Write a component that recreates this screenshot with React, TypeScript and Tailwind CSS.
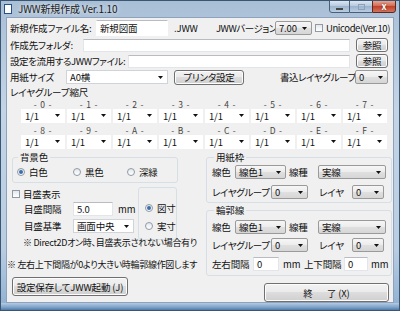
import React from "react";

const grayBox =
  "border border-[#9a9a9a] rounded-[2px] bg-[linear-gradient(#f6f6f6,#ececec_50%,#e0e0e0_50%,#d6d6d6)]";
const whiteBox = "border border-[#cfd4da] bg-white";

function Arrow() {
  return (
    <svg width="5" height="3" viewBox="0 0 5 3" className="shrink-0">
      <path d="M0 0h5L2.5 3z" fill="#111" />
    </svg>
  );
}

function Combo({ text, className, white = false }: { text: string; className: string; white?: boolean }) {
  return (
    <div className={`flex shrink-0 items-center h-[14px] pl-[3px] pr-[4px] ${white ? whiteBox : grayBox} ${className}`}>
      <span className="flex-1">{text}</span>
      <Arrow />
    </div>
  );
}

function TextBox({ text = "", className }: { text?: string; className: string }) {
  return (
    <div className={`flex shrink-0 items-center bg-white border border-[#e2e6ea] border-t-[#b8bcc2] pl-[3px] ${className}`}>
      {text}
    </div>
  );
}

function Btn({ children, className }: { children: React.ReactNode; className: string }) {
  return (
    <div
      className={`flex shrink-0 items-center justify-center rounded-[3px] border border-[#707070] bg-[linear-gradient(#f2f2f2,#ebebeb_45%,#dddddd_50%,#cfcfcf)] shadow-[inset_0_0_0_1px_#fcfcfc] ${className}`}
    >
      {children}
    </div>
  );
}

function Radio({ on = false, label, className = "" }: { on?: boolean; label: string; className?: string }) {
  return (
    <div className={`flex items-center gap-[4px] ${className}`}>
      <span className="w-[8px] h-[8px] rounded-full border border-[#8f9aa6] bg-[linear-gradient(#e4e8ec,#ffffff)] flex items-center justify-center">
        {on && <span className="w-[4px] h-[4px] rounded-full bg-[#3d6ea8]" />}
      </span>
      <span>{label}</span>
    </div>
  );
}

function Check({ label, className = "" }: { label: string; className?: string }) {
  return (
    <div className={`flex items-center gap-[3px] ${className}`}>
      <span className="w-[8px] h-[8px] border border-[#8f9aa6] bg-[linear-gradient(#e4e8ec,#ffffff)]" />
      <span>{label}</span>
    </div>
  );
}

const scales = ["0", "1", "2", "3", "4", "5", "6", "7"];
const scales2 = ["8", "9", "A", "B", "C", "D", "E", "F"];

function ScaleRow({ keys }: { keys: string[] }) {
  return (
    <>
      {keys.map((k) => (
        <div key={k} className="self-end text-center text-[8.5px] leading-[9px] tracking-[0.8px] text-[#444]">
          {"-\u00a0" + k + "\u00a0-"}
        </div>
      ))}
    </>
  );
}

export default function App() {
  return (
    <div className="w-[400px] h-[311px] overflow-hidden flex flex-col whitespace-nowrap text-[9.5px] tracking-[-0.15px] leading-[12px] text-[#111] [font-feature-settings:'palt'] font-['Noto_Sans_CJK_JP',sans-serif] border border-[#3b5673] bg-[linear-gradient(180deg,#a9bfd6_0%,#c3d4e6_35%,#b9cde2_80%,#8fb0d2_100%)]">
      {/* title bar */}
      <div className="h-[16px] flex items-start shrink-0">
        <div className="mt-[3px] ml-[3px] w-[8px] h-[10px] bg-white border border-[#2a4f8f]" />
        <div className="mt-[2px] ml-[6px] text-[10px] text-[#1c1c1c] [text-shadow:0_0_4px_#ffffff]">JWW新規作成 Ver.1.10</div>
        <div className="ml-auto mr-[3px] flex h-[13px] -mt-[1px]">
          <div className="w-[21px] border border-[#4a5f78] rounded-bl-[3px] bg-[linear-gradient(#dbe6f2,#b3c6dc_50%,#9db4ce_50%,#b9cde2)] flex items-center justify-center">
            <span className="w-[7px] h-[2px] bg-white border-[0.5px] border-[#444] mt-[4px]" />
          </div>
          <div className="w-[22px] border-y border-[#4a5f78] bg-[linear-gradient(#dbe6f2,#b3c6dc_50%,#9db4ce_50%,#b9cde2)] flex items-center justify-center">
            <span className="w-[7px] h-[6px] border border-[#8da2b8] bg-transparent" />
          </div>
          <div className="w-[24px] border border-[#5a2a22] rounded-br-[3px] bg-[linear-gradient(#e8a493,#d0644c_50%,#c2412a_50%,#d2745c)] flex items-center justify-center text-white text-[9px] font-bold [text-shadow:0_0_2px_#5a1a10]">
            x
          </div>
        </div>
      </div>

      {/* client area */}
      <div className="mx-[5px] h-[286px] shrink-0 bg-[#f0f0f0] border border-[#8ea3bb] flex flex-col">
        {/* row 1 */}
        <div className="mt-[2px] h-[16px] flex items-center">
          <div className="w-[89px] shrink-0 pl-[3px]">新規作成ファイル名:</div>
          <TextBox text="新規図面" className="w-[72px] h-[16px] border-transparent" />
          <div className="w-[48px] shrink-0 pl-[6px]">.JWW</div>
          <div className="w-[59px] shrink-0 tracking-[-0.5px]">JWWバージョン:</div>
          <Combo text="7.00" className="w-[37px]" />
          <Check label="Unicode(Ver.10)" className="ml-[3px] tracking-[-0.4px]" />
        </div>
        {/* row 2 */}
        <div className="mt-[2px] h-[14px] flex items-center">
          <div className="w-[76px] shrink-0 pl-[3px]">作成先フォルダ:</div>
          <TextBox className="w-[267px] h-[13px]" />
          <Btn className="ml-[6px] w-[32px] h-[14px]">参照</Btn>
        </div>
        {/* row 3 */}
        <div className="mt-[2px] h-[14px] flex items-center">
          <div className="w-[121px] shrink-0 pl-[3px] tracking-[-0.4px]">設定を流用するJWWファイル:</div>
          <TextBox className="w-[222px] h-[13px]" />
          <Btn className="ml-[6px] w-[32px] h-[14px]">参照</Btn>
        </div>
        {/* row 4 */}
        <div className="mt-[1px] h-[16px] flex items-center">
          <div className="w-[59px] shrink-0 pl-[3px]">用紙サイズ</div>
          <Combo text="A0横" white className="w-[102px]" />
          <Btn className="ml-[6px] w-[70px] h-[15px]">プリンタ設定</Btn>
          <div className="ml-[36px] w-[75px] shrink-0 tracking-[-0.4px]">書込レイヤグループ</div>
          <Combo text="0" className="w-[33px]" />
        </div>
        {/* layer group scale */}
        <div className="h-[12px] mt-[1px] flex items-center pl-[3px]">レイヤグループ縮尺</div>
        <div className="pl-[14px] grid grid-cols-[repeat(8,44px)] gap-x-[2px] grid-rows-[11px_13px_13px_13px] items-center">
          <ScaleRow keys={scales} />
          {scales.map((k) => (
            <Combo key={"a" + k} text="1/1" white className="h-[13px] border-transparent" />
          ))}
          <ScaleRow keys={scales2} />
          {scales2.map((k) => (
            <Combo key={"b" + k} text="1/1" white className="h-[13px] border-transparent" />
          ))}
        </div>

        {/* lower half */}
        <div className="mt-[3px] flex">
          {/* left column */}
          <div className="w-[199px] shrink-0 flex flex-col">
            <fieldset className="ml-[5px] w-[166px] border border-[#d5dfe5] rounded-[3px] px-[4px] pb-[4px]">
              <legend className="px-[2px] ml-[1px] h-[12px] flex items-center">背景色</legend>
              <div className="flex items-center h-[12px] mt-[3px]">
                <Radio on label="白色" className="w-[56px]" />
                <Radio label="黒色" className="w-[54px]" />
                <Radio label="深緑" />
              </div>
            </fieldset>

            <div className="mt-[5px] flex">
              <div className="w-[131px] shrink-0 flex flex-col">
                <div className="pl-[5px] h-[12px] flex items-center">
                  <Check label="目盛表示" />
                </div>
                <div className="mt-[2px] h-[14px] flex items-center pl-[17px]">
                  <div className="w-[49px] shrink-0">目盛間隔</div>
                  <TextBox text="5.0" className="w-[40px] h-[14px]" />
                  <div className="ml-[5px]">mm</div>
                </div>
                <div className="mt-[3px] h-[14px] flex items-center pl-[17px]">
                  <div className="w-[49px] shrink-0">目盛基準</div>
                  <Combo text="画面中央" white className="w-[61px] border-[#a9aeb4]" />
                </div>
              </div>
              <div className="w-[39px] h-[53px] -mt-[1px] border border-[#d5dfe5] rounded-[3px] flex flex-col pl-[6px] pt-[14px] gap-[6px]">
                <Radio on label="図寸" />
                <Radio label="実寸" />
              </div>
            </div>
            <div className="mt-[-3px] pl-[16px] h-[12px] flex items-center text-[9px] tracking-[-0.3px]">
              ※ Direct2Dオン時、目盛表示されない場合有り
            </div>
            <div className="mt-[10px] h-[12px] flex items-center text-[9px] tracking-[-0.3px]">
              ※ 左右上下間隔が0より大きい時輪郭線作図します
            </div>
            <Btn className="mt-[6px] ml-[5px] w-[116px] h-[19px]">設定保存してJWW起動 (J)</Btn>
          </div>

          {/* right column */}
          <div className="w-[188px] shrink-0 flex flex-col">
            <fieldset className="w-[186px] border border-[#d5dfe5] rounded-[3px] pl-[5px] pb-[3px]">
              <legend className="px-[2px] ml-[2px] h-[12px] flex items-center">用紙枠</legend>
              <div className="mt-[2px] h-[14px] flex items-center">
                <div className="w-[23px] shrink-0">線色</div>
                <Combo text="線色1" className="w-[51px]" />
                <div className="ml-[3px] w-[29px] shrink-0">線種</div>
                <Combo text="実線" className="w-[68px]" />
              </div>
              <div className="mt-[6px] h-[14px] flex items-center">
                <div className="w-[59px] shrink-0 tracking-[-0.4px]">レイヤグループ</div>
                <Combo text="0" className="w-[37px]" />
                <div className="ml-[11px] w-[33px] shrink-0">レイヤ</div>
                <Combo text="0" className="w-[32px]" />
              </div>
            </fieldset>
            <fieldset className="mt-[1px] w-[186px] border border-[#d5dfe5] rounded-[3px] pl-[5px] pb-[4px]">
              <legend className="px-[2px] ml-[2px] h-[12px] flex items-center">輪郭線</legend>
              <div className="mt-[4px] h-[14px] flex items-center">
                <div className="w-[23px] shrink-0">線色</div>
                <Combo text="線色1" className="w-[51px]" />
                <div className="ml-[3px] w-[29px] shrink-0">線種</div>
                <Combo text="実線" className="w-[68px]" />
              </div>
              <div className="mt-[4px] h-[14px] flex items-center">
                <div className="w-[59px] shrink-0 tracking-[-0.4px]">レイヤグループ</div>
                <Combo text="0" className="w-[37px]" />
                <div className="ml-[11px] w-[33px] shrink-0">レイヤ</div>
                <Combo text="0" className="w-[32px]" />
              </div>
              <div className="mt-[5px] h-[14px] flex items-center">
                <div className="w-[41px] shrink-0">左右間隔</div>
                <TextBox text="0" className="w-[26px] h-[14px]" />
                <div className="ml-[4px] w-[21px] shrink-0">mm</div>
                <div className="w-[40px] shrink-0">上下間隔</div>
                <TextBox text="0" className="w-[24px] h-[14px]" />
                <div className="ml-[3px]">mm</div>
              </div>
            </fieldset>
            <Btn className="mt-[7px] ml-[58px] w-[125px] h-[19px]">
              <span className="tracking-[14px]">終</span>
              <span>了 (X)</span>
            </Btn>
          </div>
        </div>
      </div>

      {/* bottom frame */}
      <div className="flex-1 bg-[linear-gradient(180deg,#b4cbe2,#7ea3c9_60%,#4f7aa8)]" />
    </div>
  );
}
